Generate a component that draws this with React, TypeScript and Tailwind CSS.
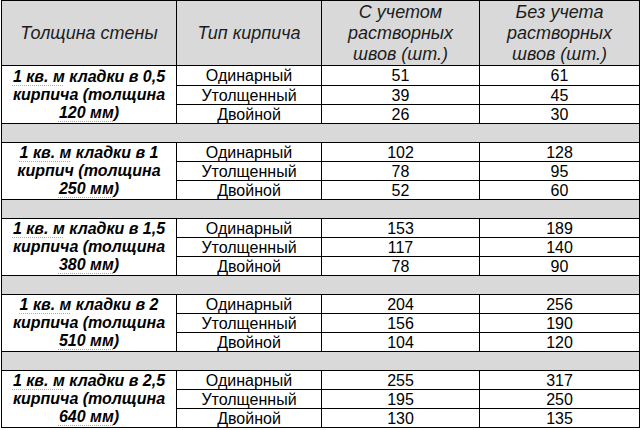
const groups = [
  { a: "1 кв. м", b: " кладки в 0,5", c: "кирпича (толщина", d: "120 мм", vals: [[51, 61], [39, 45], [26, 30]] },
  { a: "1 кв. м", b: " кладки в 1", c: "кирпич (толщина", d: "250 мм", vals: [[102, 128], [78, 95], [52, 60]] },
  { a: "1 кв. м", b: " кладки в 1,5", c: "кирпича (толщина", d: "380 мм", vals: [[153, 189], [117, 140], [78, 90]] },
  { a: "1 кв. м", b: " кладки в 2", c: "кирпича (толщина", d: "510 мм", vals: [[204, 256], [156, 190], [104, 120]] },
  { a: "1 кв. м", b: " кладки в 2,5", c: "кирпича (толщина", d: "640 мм", vals: [[255, 317], [195, 250], [130, 135]] },
];

const types = ["Одинарный", "Утолщенный", "Двойной"];

const dotted = "underline decoration-dotted decoration-[#c9a27e] decoration-1 underline-offset-[3px]";

export default function App() {
  return (
    <div className="w-[640px] h-[430px] bg-white pl-px font-['Liberation_Sans',Arial,sans-serif] text-black overflow-hidden">
      <table className="table-fixed border-collapse w-[638px] border border-black">
        <colgroup>
          <col className="w-[175px]" />
          <col className="w-[145px]" />
          <col className="w-[158px]" />
          <col className="w-[160px]" />
        </colgroup>
        <thead>
          <tr className="h-[65px] bg-[#d9d9d9] italic text-[18px] leading-[21px] text-[#1c1c1c]">
            <th className="border border-black font-normal p-0">Толщина стены</th>
            <th className="border border-black font-normal p-0">Тип кирпича</th>
            <th className="border border-black font-normal p-0">
              С учетом<br />растворных<br />швов (шт.)
            </th>
            <th className="border border-black font-normal p-0">
              Без учета<br />растворных<br />швов (шт.)
            </th>
          </tr>
        </thead>
        <tbody>
          {groups.map((g, gi) => (
            <>
              {gi > 0 && (
                <tr key={"s" + gi} className="h-[19px] bg-[#d9d9d9]">
                  <td colSpan={4} className="border-x border-black p-0" />
                </tr>
              )}
              {g.vals.map((v, ri) => (
                <tr
                  key={gi + "-" + ri}
                  className={gi === 0 && ri === 0 ? "h-[20px] text-[16px] leading-[17px]" : "h-[19px] text-[16px] leading-[17px]"}
                >
                  {ri === 0 && (
                    <td rowSpan={3} className="border border-black p-0 text-center font-bold italic text-[16px] leading-[18px]">
                      <span className={dotted}>{g.a}</span>
                      {g.b}
                      <br />
                      {g.c}
                      <br />
                      <span className={dotted}>{g.d}</span>)
                    </td>
                  )}
                  <td className="border border-black p-0 text-center">{types[ri]}</td>
                  <td className="border border-black p-0 text-center">{v[0]}</td>
                  <td className="border border-black p-0 text-center">{v[1]}</td>
                </tr>
              ))}
            </>
          ))}
        </tbody>
      </table>
    </div>
  );
}
